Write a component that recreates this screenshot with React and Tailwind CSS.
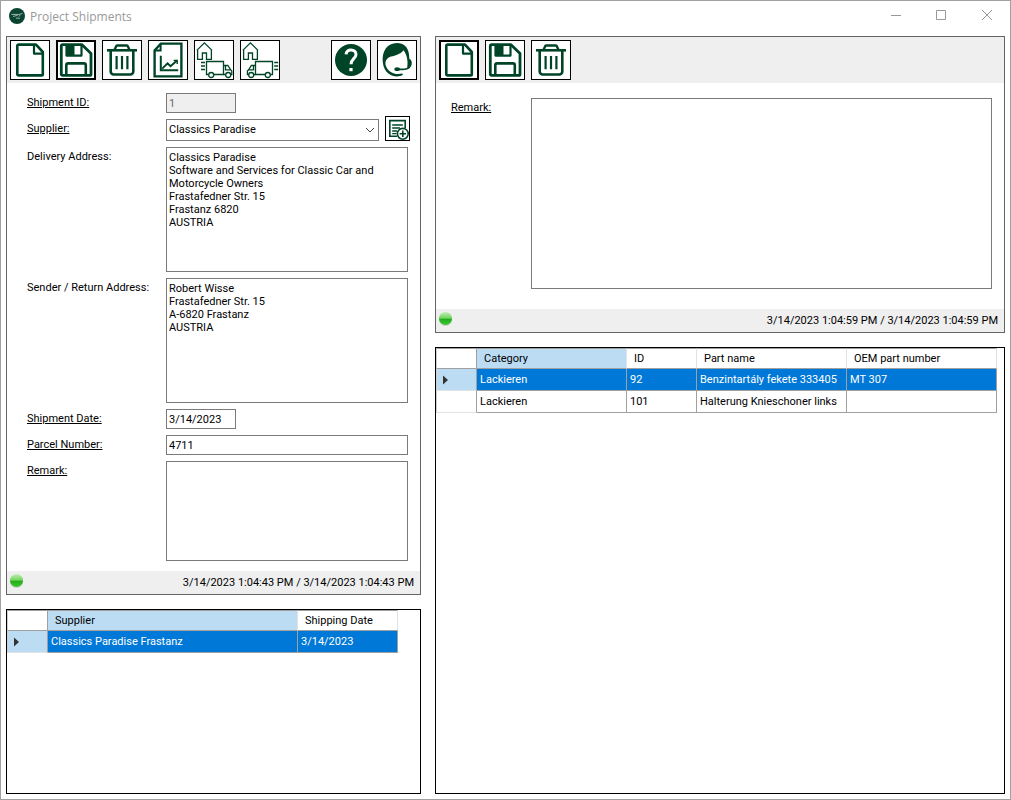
// src/App.jsx
import React, { useState } from "react";
import clsx from "clsx";

const GREEN = "#004428";

const DocumentIcon = () => (
  <svg viewBox="0 0 40 40" className="size-10" fill="none" stroke={GREEN} strokeWidth="2.6" strokeLinejoin="round">
    <path d="M8.5 4.6H26L32.8 12V34.2a1.2 1.2 0 0 1-1.2 1.2H8.5a1.2 1.2 0 0 1-1.2-1.2V5.8a1.2 1.2 0 0 1 1.2-1.2Z" />
    <path d="M24 5V13.6H32.6" strokeWidth="2.2" />
  </svg>
);

const SaveIcon = () => (
  <svg viewBox="0 0 40 40" className="size-10" fill="none" stroke={GREEN} strokeWidth="2.8" strokeLinejoin="round">
    <path d="M6.5 4.7H26L35 13.5V34.2a1.2 1.2 0 0 1-1.2 1.2H6.5a1.2 1.2 0 0 1-1.2-1.2V5.9a1.2 1.2 0 0 1 1.2-1.2Z" />
    <path d="M10.5 5V15.6H25.5V5" strokeWidth="2.2" />
    <path d="M10 5h8.5v11H10Z" fill={GREEN} stroke="none" />
    <path d="M10.3 35V25.2a1.8 1.8 0 0 1 1.8-1.8H28a1.8 1.8 0 0 1 1.8 1.8V35" strokeWidth="2.6" />
  </svg>
);

const TrashIcon = () => (
  <svg viewBox="0 0 40 40" className="size-10" fill="none" stroke={GREEN} strokeWidth="2.6">
    <path d="M5 10.3H35" />
    <path d="M12.4 10 14.2 6.2a1.4 1.4 0 0 1 1.2-.7h9.2a1.4 1.4 0 0 1 1.2.7L27.6 10" strokeWidth="2.4" />
    <path d="M8.7 11V31.5a3 3 0 0 0 3 3H28.3a3 3 0 0 0 3-3V11" />
    <path d="M14.6 16V29.3M20 16V29.3M25.4 16V29.3" strokeWidth="2.2" />
  </svg>
);

const ReportIcon = () => (
  <svg viewBox="0 0 40 40" className="size-10" fill="none" stroke={GREEN} strokeWidth="2.4">
    <path d="M12.8 3.6H33.4V36.4H6.6V10.4Z" />
    <path d="M12.6 4V10.4H7" strokeWidth="2" />
    <path d="M12.8 15.8V30.2H30.2" strokeWidth="2" />
    <path d="M14.2 28.6 19.6 23.4 22.6 26.2 29 20.6" strokeWidth="2" />
    <path d="M25.6 20.4H29.2V24" strokeWidth="1.4" />
  </svg>
);

const HousePath = () => (
  <path d="M2.8 10.4 10.4 2.8 18 10.4M3.6 9.8V19.4H8.4V13H12.5V19.4H17.4V9.8" />
);

const ShipOutIcon = () => (
  <svg viewBox="0 0 40 40" className="size-10" fill="none" stroke={GREEN} strokeWidth="1.3">
    <HousePath />
    <path d="M14.2 34.5H12.5V21.5H29.5V34.5H20M7 22.5h4M7 26h4M7 29.5h4" />
    <path d="M29.5 25.5H33.8L36.8 29.8 37.8 31V34.5H36.8M31.4 34.5H29.5M31.5 25.6V29.8H36.4" />
    <circle cx="17.2" cy="35" r="2.5" />
    <circle cx="34.2" cy="35" r="2.5" />
  </svg>
);

const ShipReturnIcon = () => (
  <svg viewBox="0 0 40 40" className="size-10" fill="none" stroke={GREEN} strokeWidth="1.3">
    <HousePath />
    <path d="M25 34.5H15.5V21.5H32.5V34.5H30.4M34.2 22.5h4M34.2 26h4M34.2 29.5h4" />
    <path d="M15.5 25.5H11.4L8.6 29.8 7.4 31V34.5H8.6M13.8 34.5H15.5M13.5 25.6V29.8H8.6" />
    <circle cx="11.2" cy="35" r="2.5" />
    <circle cx="27.8" cy="35" r="2.5" />
  </svg>
);

const HelpIcon = () => (
  <svg viewBox="0 0 40 40" className="size-10" fill="none">
    <circle cx="20" cy="20" r="16" fill={GREEN} />
    <path d="M15 14.4C15.4 11.4 17.2 10 20 10c3 0 5 1.8 5 4.4 0 4.2-5 4.4-5 9.8" stroke="white" strokeWidth="3" />
    <rect x="18.4" y="28" width="3.2" height="3.2" fill="white" />
  </svg>
);

const SupportIcon = () => (
  <svg viewBox="0 0 40 40" className="size-10" fill="none">
    <path
      fill={GREEN}
      d="M5.8 22C4.6 11.6 10 3 20 3c6.8 0 11.4 4.4 12 11.4l.4 4.6c1.6.6 2.4 2 2.4 3.8 0 2.6-.8 4.4-2.8 5.4l-1.8-.4C31 23 30.800 16 26.600 10.200 23 14.400 18.400 15.600 14 16.400 10.600 17.600 8.600 19.800 8.200 23.400Z"
    />
    <path
      fill={GREEN}
      d="M5.8 21.400C6 29 11 36 19.400 36.400 22.200 36.400 24.400 35.800 26 34.800L25.400 33.600C16.600 35.600 8.800 30.800 8.200 22.400Z"
    />
    <path d="M32.6 27C31 28.8 28.600 29.400 25.400 29.400H20" stroke={GREEN} strokeWidth="1.8" />
    <ellipse cx="20.2" cy="29.2" rx="2.8" ry="1.900" fill={GREEN} />
  </svg>
);

const AddRecordIcon = () => (
  <svg viewBox="0 0 25 25" className="size-[25px]" fill="none" stroke={GREEN} strokeWidth="1.6">
    <path d="M12 20.2H4.8V4.6H20.2V12" />
    <path d="M7.2 9H17.8M7.2 12H15M7.2 15H12.2M7.2 17.600H11.4" strokeWidth="1.3" />
    <circle cx="17.8" cy="17.8" r="5.4" fill="white" />
    <path d="M14.6 17.8H21M17.8 14.6V21" />
  </svg>
);

const LogoIcon = () => (
  <svg viewBox="0 0 16 16" className="size-4">
    <circle cx="8" cy="8" r="8" fill="#0b4532" />
    <path d="M2.4 6.4H10.5L13.5 5.4M4 8.4 8.6 7.4M7 10.2H11M9.6 8.6 11.4 7" fill="none" stroke="#a9bfb6" strokeWidth="0.9" />
  </svg>
);

const StatusLed = ({ id }) => (
  <svg viewBox="0 0 16 18" className="h-[18px] w-4">
    <defs>
      <linearGradient id={id} x1="0" y1="0" x2="0" y2="1">
        <stop offset="0" stopColor="#c2efb4" />
        <stop offset="0.48" stopColor="#74d45f" />
        <stop offset="0.56" stopColor="#22ac1c" />
        <stop offset="1" stopColor="#3cc92f" />
      </linearGradient>
    </defs>
    <ellipse cx="7.5" cy="10.4" rx="6.6" ry="6.4" fill="#c4cbc2" />
    <circle cx="7.5" cy="9.4" r="6.5" fill={`url(#${id})`} />
  </svg>
);

const RowMarker = () => (
  <svg viewBox="0 0 6 10" className="ml-1.5 h-2.5 w-1.5">
    <path d="M0 0.5 5 5 0 9.5Z" fill="#333333" />
  </svg>
);

const ToolButton = ({ label, active, children }) => (
  <button
    type="button"
    aria-label={label}
    className={clsx("size-10 bg-white ring-inset ring-black hover:bg-gray-100", active ? "ring-2" : "ring-1")}
  >
    {children}
  </button>
);

const Toolbar = ({ children }) => <div className="flex gap-1.5 bg-[#efefef] p-[3px]">{children}</div>;

const Field = ({ id, label, underline = true, children }) => (
  <div className="flex items-start">
    <label htmlFor={id} className={clsx("w-[139px] shrink-0 leading-5", underline && "underline")}>
      {label}
    </label>
    {children}
  </div>
);

const StatusBar = ({ id, children }) => (
  <div className="flex h-[23px] items-start justify-between bg-[#efefef] pr-1.5 pl-0.5">
    <StatusLed id={id} />
    <span className="leading-[23px]">{children}</span>
  </div>
);

const DataGrid = ({ columns, rows, width }) => {
  const [selected, setSelected] = useState(0);

  return (
    <table className={clsx("table-fixed border-separate border-spacing-0 text-left", width)}>
      <colgroup>
        <col className="w-[41px]" />
        {columns.map((c) => (
          <col key={c.name} className={c.width} />
        ))}
      </colgroup>
      <thead>
        <tr className="h-[21px]">
          <th className="border border-[#a0a0a0] border-l-[#d0d0d0] p-0" aria-label="Row" />
          {columns.map((c, i) => (
            <th
              key={c.name}
              className={clsx(
                "border-y border-r border-y-[#a0a0a0] border-r-[#e2e2e2] px-[7px] py-0 font-normal",
                i === 0 && "bg-[#bcdcf4]"
              )}
            >
              {c.name}
            </th>
          ))}
        </tr>
      </thead>
      <tbody>
        {rows.map((row, r) => (
          <tr key={r} onClick={() => setSelected(r)} className="h-[22px]">
            <td
              className={clsx(
                "border-x border-b border-r-[#a0a0a0] border-b-[#e2e2e2] border-l-[#d0d0d0] p-0",
                selected === r && "bg-[#bcdcf4]"
              )}
            >
              {selected === r && <RowMarker />}
            </td>
            {row.map((cell, i) => (
              <td
                key={i}
                className={clsx(
                  "truncate border-r border-b border-[#a0a0a0] px-[3px] py-0",
                  selected === r && "bg-[#0078d7] text-white"
                )}
              >
                {cell}
              </td>
            ))}
          </tr>
        ))}
      </tbody>
    </table>
  );
};

const boxClass = "border border-[#7a7a7a] bg-white px-0.5";
const areaClass = "block resize-none overflow-hidden border border-[#7a7a7a] bg-white px-0.5 pt-[3px] leading-[13px]";

const deliveryAddress = `Classics Paradise
Software and Services for Classic Car and
Motorcycle Owners
Frastafedner Str. 15
Frastanz 6820
AUSTRIA`;

const senderAddress = `Robert Wisse
Frastafedner Str. 15
A-6820 Frastanz
AUSTRIA`;

const shipmentColumns = [
  { name: "Supplier", width: "w-[250px]" },
  { name: "Shipping Date", width: "w-[100px]" },
];

const partColumns = [
  { name: "Category", width: "w-[150px]" },
  { name: "ID", width: "w-[70px]" },
  { name: "Part name", width: "w-[150px]" },
  { name: "OEM part number", width: "w-[150px]" },
];

const App = () => {
  return (
    <div className="flex min-h-screen flex-col border border-[#a0a0a0] bg-white font-['Roboto',sans-serif] text-[11px] leading-4 text-black">
      {/* Title bar */}
      <header className="flex h-[35px] shrink-0 items-start justify-between pr-4 pl-2">
        <div className="flex items-center gap-[5px] pt-1.5">
          <LogoIcon />
          <h1 className="pt-0.5 font-['Open_Sans',sans-serif] text-[12px] text-[#999999]">Project Shipments</h1>
        </div>
        <div className="flex gap-8 pt-2">
          <button type="button" aria-label="Minimize">
            <svg viewBox="0 0 14 14" className="size-3.5" fill="none" stroke="#999999">
              <path d="M3 6.5H13" />
            </svg>
          </button>
          <button type="button" aria-label="Maximize">
            <svg viewBox="0 0 14 14" className="size-3.5" fill="none" stroke="#999999">
              <path d="M2.5 1.5H11.5V10.5H2.5Z" />
            </svg>
          </button>
          <button type="button" aria-label="Close">
            <svg viewBox="0 0 14 14" className="size-3.5" fill="none" stroke="#999999">
              <path d="M2 1 12 11M12 1 2 11" />
            </svg>
          </button>
        </div>
      </header>

      <main className="flex flex-1 gap-3.5 px-[5px] pb-[5px]">
        {/* Shipment */}
        <div className="flex w-[415px] shrink-0 flex-col gap-3.5">
          <section className="border border-[#646464]">
            <Toolbar>
              <ToolButton label="New shipment"><DocumentIcon /></ToolButton>
              <ToolButton label="Save shipment" active><SaveIcon /></ToolButton>
              <ToolButton label="Delete shipment"><TrashIcon /></ToolButton>
              <ToolButton label="Report"><ReportIcon /></ToolButton>
              <ToolButton label="Ship parts"><ShipOutIcon /></ToolButton>
              <ToolButton label="Return parts"><ShipReturnIcon /></ToolButton>
              <div className="ml-auto flex gap-1.5">
                <ToolButton label="Help"><HelpIcon /></ToolButton>
                <ToolButton label="Support"><SupportIcon /></ToolButton>
              </div>
            </Toolbar>

            <form className="flex flex-col gap-1.5 py-2.5 pr-3 pl-5">
              <Field id="shipmentId" label="Shipment ID:">
                <input
                  id="shipmentId"
                  type="text"
                  defaultValue="1"
                  disabled
                  className="h-5 w-[70px] border border-[#7a7a7a] bg-[#efefef] px-0.5 text-[#6d6d6d]"
                />
              </Field>
              <Field id="supplier" label="Supplier:">
                <div className="flex h-[22px] flex-1 items-end gap-1.5">
                  <div className="relative w-[213px]">
                    <select
                      id="supplier"
                      defaultValue="Classics Paradise"
                      className="block h-[22px] w-full appearance-none border border-[#7a7a7a] bg-white pr-5 pl-0.5"
                    >
                      <option>Classics Paradise</option>
                    </select>
                    <svg viewBox="0 0 10 6" className="pointer-events-none absolute top-2 right-1 h-1.5 w-2.5" fill="none" stroke="#444444">
                      <path d="M1 1 5 5 9 1" />
                    </svg>
                  </div>
                  <button type="button" aria-label="Add supplier" className="size-[25px] bg-white ring-1 ring-black ring-inset">
                    <AddRecordIcon />
                  </button>
                </div>
              </Field>
              <Field id="delivery" label="Delivery Address:" underline={false}>
                <textarea id="delivery" defaultValue={deliveryAddress} className={clsx(areaClass, "h-[125px] flex-1")} />
              </Field>
              <Field id="sender" label="Sender / Return Address:" underline={false}>
                <textarea id="sender" defaultValue={senderAddress} className={clsx(areaClass, "h-[125px] flex-1")} />
              </Field>
              <Field id="shipmentDate" label="Shipment Date:">
                <input id="shipmentDate" type="text" defaultValue="3/14/2023" className={clsx(boxClass, "h-5 w-[70px]")} />
              </Field>
              <Field id="parcel" label="Parcel Number:">
                <input id="parcel" type="text" defaultValue="4711" className={clsx(boxClass, "h-5 flex-1")} />
              </Field>
              <Field id="remark" label="Remark:">
                <textarea id="remark" className={clsx(areaClass, "h-[100px] flex-1")} />
              </Field>
            </form>

            <StatusBar id="shipmentLed">3/14/2023 1:04:43 PM / 3/14/2023 1:04:43 PM</StatusBar>
          </section>

          <section className="flex-1 border border-black">
            <DataGrid
              width="w-[391px]"
              columns={shipmentColumns}
              rows={[["Classics Paradise Frastanz", "3/14/2023"]]}
            />
          </section>
        </div>

        {/* Parts of the shipment */}
        <div className="flex min-w-0 flex-1 flex-col gap-3.5">
          <section className="border border-[#646464]">
            <Toolbar>
              <ToolButton label="New part" active><DocumentIcon /></ToolButton>
              <ToolButton label="Save part"><SaveIcon /></ToolButton>
              <ToolButton label="Delete part"><TrashIcon /></ToolButton>
            </Toolbar>

            <form className="flex items-start pt-[15px] pr-3 pb-5 pl-[15px]">
              <label htmlFor="partRemark" className="w-20 shrink-0 leading-5 underline">
                Remark:
              </label>
              <textarea id="partRemark" className={clsx(areaClass, "h-[191px] flex-1")} />
            </form>

            <StatusBar id="partLed">3/14/2023 1:04:59 PM / 3/14/2023 1:04:59 PM</StatusBar>
          </section>

          <section className="flex-1 border border-black">
            <DataGrid
              width="w-[561px]"
              columns={partColumns}
              rows={[
                ["Lackieren", "92", "Benzintartály fekete 333405", "MT 307"],
                ["Lackieren", "101", "Halterung Knieschoner links", ""],
              ]}
            />
          </section>
        </div>
      </main>
    </div>
  );
};

export default App;
